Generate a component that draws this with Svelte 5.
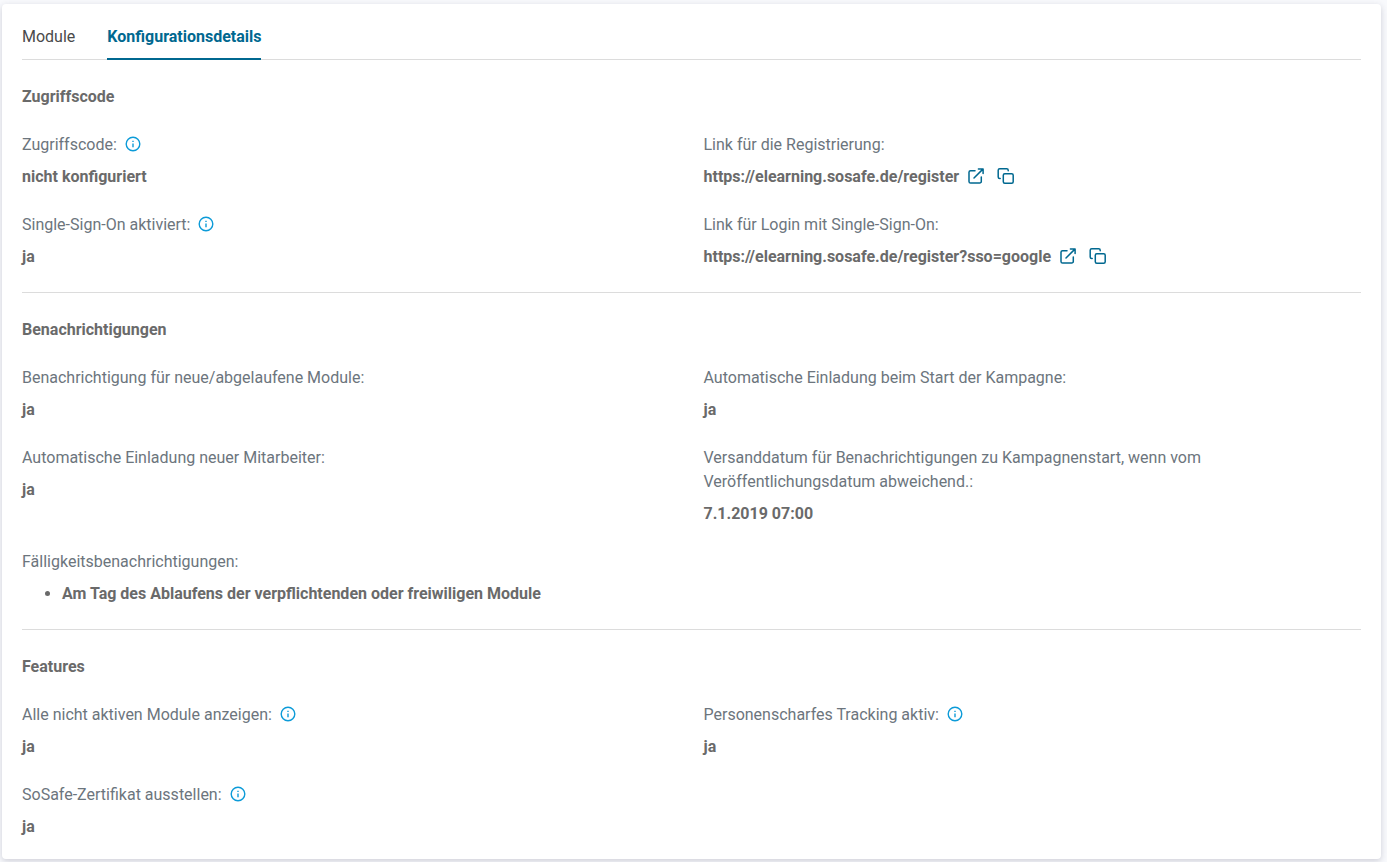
<script>
  const groups = [
    {
      title: 'Zugriffscode',
      items: [
        { label: 'Zugriffscode:', value: 'nicht konfiguriert', info: true },
        { label: 'Link für die Registrierung:', link: 'https://elearning.sosafe.de/register' },
        { label: 'Single-Sign-On aktiviert:', value: 'ja', info: true },
        { label: 'Link für Login mit Single-Sign-On:', link: 'https://elearning.sosafe.de/register?sso=google' }
      ]
    },
    {
      title: 'Benachrichtigungen',
      items: [
        { label: 'Benachrichtigung für neue/abgelaufene Module:', value: 'ja' },
        { label: 'Automatische Einladung beim Start der Kampagne:', value: 'ja' },
        { label: 'Automatische Einladung neuer Mitarbeiter:', value: 'ja' },
        { label: 'Versanddatum für Benachrichtigungen zu Kampagnenstart, wenn vom Veröffentlichungsdatum abweichend.:', value: '7.1.2019 07:00' },
        { label: 'Fälligkeitsbenachrichtigungen:', list: ['Am Tag des Ablaufens der verpflichtenden oder freiwiligen Module'] }
      ]
    },
    {
      title: 'Features',
      items: [
        { label: 'Alle nicht aktiven Module anzeigen:', value: 'ja', info: true },
        { label: 'Personenscharfes Tracking aktiv:', value: 'ja', info: true },
        { label: 'SoSafe-Zertifikat ausstellen:', value: 'ja', info: true }
      ]
    }
  ];
  let active = $state('Konfigurationsdetails');
</script>

<main class="card">
  <div class="tabs" role="tablist">
    {#each ['Module', 'Konfigurationsdetails'] as tab}
      <button type="button" role="tab" class:active={active === tab} aria-selected={active === tab} onclick={() => (active = tab)}>{tab}</button>
    {/each}
  </div>

  {#each groups as group}
    <section>
      <h2>{group.title}</h2>
      <dl>
        {#each group.items as item}
          <div class="item">
            <dt>
              <span>{item.label}</span>
              {#if item.info}
                <button type="button" class="icon info" aria-label="Info">
                  <svg width="16" height="16" viewBox="0 0 16 16" fill="none" stroke="currentColor" stroke-width="1.4">
                    <circle cx="8" cy="8" r="6.8" />
                    <path d="M8 7.4v3.8" />
                    <path d="M8 4.7v1.4" />
                  </svg>
                </button>
              {/if}
            </dt>
            <dd>
              {#if item.link}
                <span>{item.link}</span>
                <a class="icon" href={item.link} aria-label="Link öffnen">
                  <svg width="18" height="18" viewBox="0 0 18 18" fill="none" stroke="currentColor" stroke-width="1.5" stroke-linecap="round" stroke-linejoin="round">
                    <path d="M8 3.7H3.6a1.6 1.6 0 0 0-1.6 1.6v9.1A1.6 1.6 0 0 0 3.6 16h9.1a1.6 1.6 0 0 0 1.6-1.6V10" />
                    <path d="M11.4 1.9h4.7v4.7M15.9 2.1L7 11" />
                  </svg>
                </a>
                <button type="button" class="icon copy" aria-label="Link kopieren">
                  <svg width="18" height="18" viewBox="0 0 18 18" fill="none" stroke="currentColor" stroke-width="1.5" stroke-linecap="round" stroke-linejoin="round">
                    <rect x="6.3" y="6.8" width="9.9" height="9.4" rx="1.5" />
                    <path d="M3.2 11.6H2.7a1.5 1.5 0 0 1-1.5-1.5V3.3a1.5 1.5 0 0 1 1.5-1.5h7a1.5 1.5 0 0 1 1.5 1.5v.5" />
                  </svg>
                </button>
              {:else if item.list}
                <ul>
                  {#each item.list as entry}<li>{entry}</li>{/each}
                </ul>
              {:else}
                {item.value}
              {/if}
            </dd>
          </div>
        {/each}
      </dl>
    </section>
  {/each}
</main>

<style>
  :global(body) {
    background: #f8f9fc;
    font: 16px/24px Roboto, sans-serif;
    color: #6a6a6a;
  }
  .card {
    margin: 4px 6px 4px 2px;
    padding: 21px 20px 20px;
    background: #fff;
    border-radius: 4px;
    box-shadow: 0 2px 6px rgba(40, 40, 70, 0.2);
  }
  button {
    padding: 0;
    border: 0;
    background: none;
    font: inherit;
    color: inherit;
    cursor: pointer;
  }
  .tabs {
    display: flex;
    gap: 32px;
    border-bottom: 1px solid #dcdcdc;
  }
  .tabs button {
    margin-bottom: -1px;
    padding-bottom: 9px;
    border-bottom: 2px solid transparent;
    color: #4a4a4a;
  }
  .tabs .active {
    border-color: #006890;
    color: #006890;
    font-weight: 700;
  }
  section {
    padding: 25px 0 23px;
  }
  section + section {
    border-top: 1px solid #dcdcdc;
  }
  section:last-child {
    padding-bottom: 0;
  }
  h2 {
    margin: 0 0 24px;
    font-size: 16px;
    font-weight: 700;
  }
  dl {
    display: grid;
    grid-template-columns: 1fr 1fr;
    gap: 24px;
    margin: 0;
  }
  .item {
    padding-right: 120px;
  }
  dt {
    display: flex;
    align-items: center;
    gap: 8px;
    margin-bottom: 8px;
    color: #6c757d;
  }
  dd {
    display: flex;
    align-items: center;
    gap: 8px;
    margin: 0;
    font-weight: 700;
  }
  .icon {
    display: flex;
    margin-bottom: 2px;
    color: #006890;
  }
  .info {
    color: #0c9bd8;
  }
  .copy {
    margin-left: 4px;
  }
  ul {
    margin: 0;
    padding-left: 40px;
  }
</style>
